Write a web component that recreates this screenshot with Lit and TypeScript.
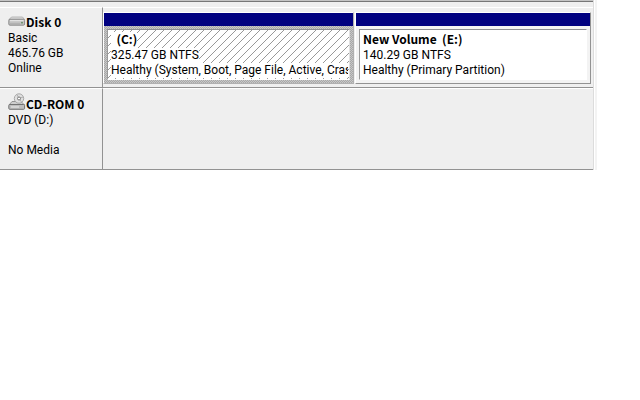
import { LitElement, html, css, svg, nothing } from "lit";
import { customElement, property } from "lit/decorators.js";

interface Volume {
  name: string;
  size: string;
  status: string;
  selected: boolean;
  weight: number;
}

interface Disk {
  kind: "disk" | "cdrom";
  name: string;
  lines: string[];
  volumes: Volume[];
}

const disks: Disk[] = [
  {
    kind: "disk",
    name: "Disk 0",
    lines: ["Basic", "465.76 GB", "Online"],
    volumes: [
      {
        name: "\u00a0 (C:)",
        size: "325.47 GB NTFS",
        status: "Healthy (System, Boot, Page File, Active, Crash Dump)",
        selected: true,
        weight: 251,
      },
      {
        name: "New Volume\u00a0 (E:)",
        size: "140.29 GB NTFS",
        status: "Healthy (Primary Partition)",
        selected: false,
        weight: 236,
      },
    ],
  },
  { kind: "cdrom", name: "CD-ROM 0", lines: ["DVD (D:)", "\u00a0", "No Media"], volumes: [] },
];

const diskIcon = svg`
  <path d="M1 8.5 L3.5 6 H14.5 L16.5 8.5 Z" fill="#dedede" stroke="#a8a8a8" stroke-width="0.8"/>
  <rect x="0.8" y="8.2" width="15.8" height="6" rx="1.2" fill="#c2c2c2" stroke="#858585" stroke-width="0.9"/>
  <path d="M2 9.7 H15.5" stroke="#e9e9e9"/>
  <path d="M2 12.8 H12" stroke="#a5a5a5" stroke-width="0.8"/>
  <circle cx="14" cy="11.7" r="0.9" fill="#5f8a5f"/>`;

const cdIcon = svg`
  <path d="M1 12 L4 8.5 H13 L16.5 12 Z" fill="#cfcfcf" stroke="#8c8c8c" stroke-width="0.9"/>
  <rect x="0.8" y="11.5" width="15.8" height="4.8" rx="1" fill="#bebebe" stroke="#737373"/>
  <path d="M3 14 H11" stroke="#ececec"/>
  <circle cx="11" cy="5.5" r="4.7" fill="#e0e0e0" stroke="#a2a2a2" stroke-width="0.9"/>
  <path d="M11 5.5 L9 1.8 M11 5.5 L13.5 9 M11 5.5 L15 4" stroke="#b0b0b0"/>
  <circle cx="11" cy="5.5" r="1.5" fill="#fff" stroke="#6f6f6f" stroke-width="0.9"/>`;

@customElement("volume-block")
class VolumeBlock extends LitElement {
  @property({ attribute: false }) volume!: Volume;

  static styles = css`
    :host {
      display: flex;
      min-width: 0;
    }
    .block {
      flex: 1;
      min-width: 0;
      display: flex;
      flex-direction: column;
      border: 1px solid #fff;
      border-right-color: #929292;
      border-bottom-color: #929292;
    }
    .block.selected {
      border-right-color: #b0b0b0;
      border-bottom-color: #b0b0b0;
    }
    .bar {
      height: 13px;
      background: #000080;
    }
    .frame {
      flex: 1;
      display: flex;
      padding: 3px;
      background: #f3f3f3;
    }
    .selected .frame {
      background: repeating-conic-gradient(#a8a8a8 0 25%, #c8c8c8 0 50%) 0 0 / 2px 2px;
    }
    .body {
      position: relative;
      flex: 1;
      min-width: 0;
      overflow: hidden;
      padding: 2px 4px 0 3px;
      border: 1px solid #fff;
      border-top-color: #8d8d94;
      border-left-color: #9a9a9a;
      background: #fff;
    }
    .selected .body {
      padding-right: 1px;
      border-right-color: #e0e0e0;
    }
    .hatch {
      fill: none;
      stroke: #999;
    }
    .pattern {
      position: absolute;
      inset: 0;
      width: 100%;
      height: 100%;
    }
    .text {
      position: relative;
      display: flex;
      flex-direction: column;
      align-items: flex-start;
    }
    .line {
      max-width: 100%;
      overflow: hidden;
      white-space: nowrap;
      line-height: 15px;
      background: #fff;
    }
    .name {
      padding-bottom: 3px;
      font-family: "Noto Sans CJK SC", "Open Sans", sans-serif;
      font-weight: 700;
      line-height: 13px;
    }
  `;

  render() {
    const v = this.volume;
    return html`<section class="block ${v.selected ? "selected" : ""}">
      <div class="bar"></div>
      <div class="frame">
        <div class="body">
          ${v.selected
            ? html`<svg class="pattern" aria-hidden="true">
                <defs>
                  <pattern id="hatch" width="8" height="8" patternUnits="userSpaceOnUse">
                    <path class="hatch" d="M-1 9 L9 -1 M-1 1 L1 -1 M7 9 L9 7" />
                  </pattern>
                </defs>
                <rect width="100%" height="100%" fill="url(#hatch)" />
              </svg>`
            : nothing}
          <div class="text">
            <div class="line name">${v.name}</div>
            <div class="line">${v.size}</div>
            <div class="line">${v.status}</div>
          </div>
        </div>
      </div>
    </section>`;
  }
}

@customElement("app-root")
class AppRoot extends LitElement {
  static styles = css`
    :host {
      display: block;
      min-height: 100vh;
      background: #fff;
      color: #000;
      font: 12px/15px Roboto, "Open Sans", sans-serif;
    }
    .panel {
      margin-right: 43px;
      border-right: 2px solid #f3f3f3;
      background: #fff;
    }
    .rows {
      margin-right: 1px;
      border-right: 1px solid #dcdcdc;
      background: #efefef;
    }
    .splitter {
      height: 2px;
      box-sizing: border-box;
      border-top: 1px solid #c4c4c4;
      background: #777;
      margin-bottom: 5px;
    }
    .row {
      display: grid;
      grid-template-columns: 103px minmax(0, 1fr);
      min-height: 81px;
    }
    .row + .row {
      min-height: 82px;
    }
    .label {
      border-top: 1px solid #fff;
      border-right: 1px solid #929292;
      border-bottom: 1px solid #929292;
      padding: 7px 0 0 8px;
      white-space: nowrap;
    }
    .row + .row .label {
      padding-top: 8px;
    }
    .title {
      display: flex;
      align-items: center;
      height: 13px;
      margin-bottom: 3px;
      font-family: "Noto Sans CJK SC", "Open Sans", sans-serif;
      font-weight: 700;
    }
    .icon {
      width: 18px;
      height: 18px;
      margin: 0 0 4px;
      flex: none;
    }
    .volumes {
      display: grid;
      gap: 1px;
      padding: 4px 2px 3px 0;
      border-top: 1px solid #fff;
      border-bottom: 1px solid #929292;
    }
  `;

  render() {
    return html`<main class="panel">
      <div class="rows">
        <div class="splitter"></div>
        ${disks.map(
          (d) => html`<div class="row">
            <div class="label">
              <div class="title">
                <svg class="icon" viewBox="0 0 18 18" aria-hidden="true">
                  ${d.kind === "disk" ? diskIcon : cdIcon}
                </svg>
                <span>${d.name}</span>
              </div>
              ${d.lines.map((l) => html`<div>${l}</div>`)}
            </div>
            <div
              class="volumes"
              style="grid-template-columns:${d.volumes.map((v) => `minmax(0, ${v.weight}fr)`).join(" ") || "none"}"
            >
              ${d.volumes.map((v) => html`<volume-block .volume=${v}></volume-block>`)}
            </div>
          </div>`,
        )}
      </div>
    </main>`;
  }
}
